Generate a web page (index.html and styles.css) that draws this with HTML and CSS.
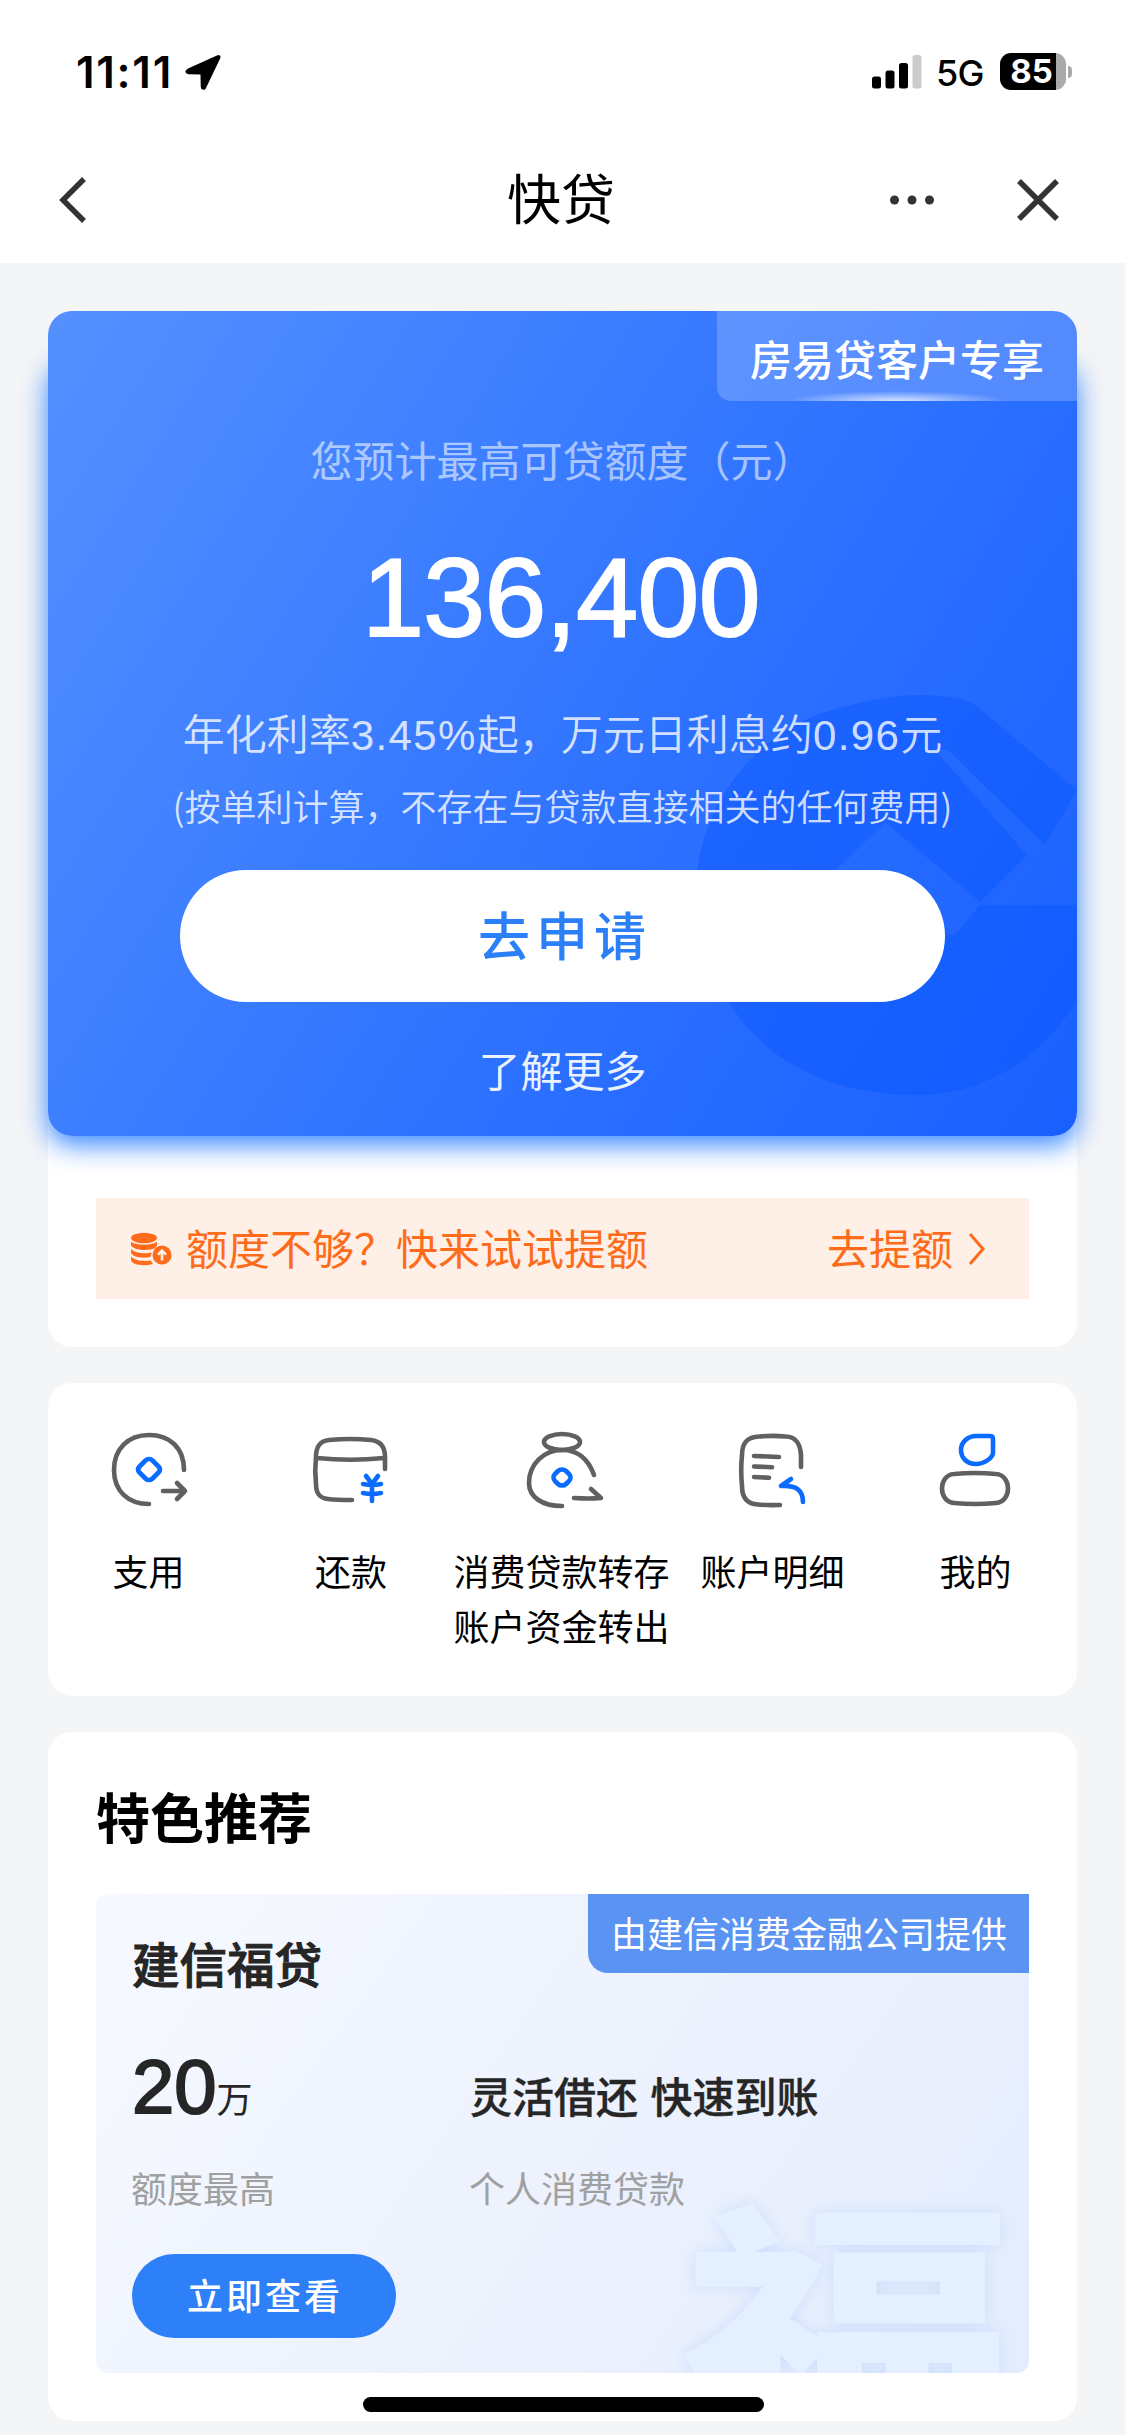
FILE: index.html
```
<!DOCTYPE html>
<html lang="zh-CN">
<head>
<meta charset="utf-8">
<title>快贷</title>
<link rel="stylesheet" href="styles.css">
</head>
<body>
<header class="top">
  <div class="status">
    <span class="time">11:11</span>
    <svg class="loc" width="36" height="36" viewBox="0 0 36 36"><path d="M33 2.500 3 16c-2 1-1.500 3 .5 3l13.200.3.300 13.500c0 2 2 2.400 3 .5L34 4C34.600 2.500 34 2 33 2.500z" stroke="#000" stroke-width="2.500" stroke-linejoin="round"/></svg>
    <svg class="signal" width="50" height="34" viewBox="0 0 50 34"><rect y="21.500" width="9" height="12" rx="2.500"/><rect x="13.500" y="15.500" width="9" height="18" rx="2.500"/><rect x="27" y="8" width="9" height="25.500" rx="2.500"/><rect x="40.500" y="0" width="9" height="33.500" rx="2.500" fill="#ccc"/></svg>
    <span class="net">5G</span>
    <div class="battery"><span>85</span></div>
    <i class="battery-tip"></i>
  </div>
  <nav class="nav">
    <svg class="back" width="30" height="48" viewBox="0 0 30 48"><path d="M26 3 5 24l21 21"/></svg>
    <h1>快贷</h1>
    <svg class="dots" width="46" height="12" viewBox="0 0 46 12"><circle cx="5.500" cy="6" r="4.500"/><circle cx="23" cy="6" r="4.500"/><circle cx="40.500" cy="6" r="4.500"/></svg>
    <svg class="close" width="44" height="44" viewBox="0 0 44 44"><path d="m3 3 38 38M41 3 3 41"/></svg>
  </nav>
</header>

<main>
  <section class="card loan">
    <div class="hero">
      <div class="hero-bg">
        <svg width="1029" height="825" viewBox="0 0 1029 825"><path d="M887 439 979 544 932 591 837 511 787 560 787 625H880L907 624 932 594H1029V690C990 750 935 784 867 784 770 784 710 740 680 690 655 650 645 600 650 555 660 480 720 410 800 395 825 388 850 384 872 384 900 384 915 388 927 394L1029 479 997 534 900 439z"/></svg>
      </div>
      <span class="ribbon">房易贷客户专享</span>
      <p class="label">您预计最高可贷额度（元）</p>
      <p class="amount">136,400</p>
      <p class="rate">年化利率<b>3.45%</b>起，万元日利息约<b>0.96</b>元</p>
      <p class="note">(按单利计算，不存在与贷款直接相关的任何费用)</p>
      <a class="apply">去申请</a>
      <a class="more">了解更多</a>
    </div>
    <div class="raise">
      <svg class="coins" width="42" height="34" viewBox="0 0 42 34"><ellipse cx="13" cy="6" rx="13" ry="5.200"/><path d="M0 9.500c4 4.200 22 4.200 26 0v3c0 2-1 3-3 4-6 2.500-20 2-23-3zM0 17c4 4.500 15 5 21 3.500-1 1.500-1.500 3-1.500 4.500-8 1.500-17 .5-19.500-4zM0 24.500c4 4.500 13 5 20 4 .5 1.500 1 2.500 2 3.500C12 34.500 1 33 0 28z"/><circle cx="31" cy="23" r="9.500"/><path d="M31 28.500V19.500m-4 3.200 4-4 4 4" stroke="#fef0e7" stroke-width="2.600" fill="none"/></svg>
      <span class="ask">额度不够？快来试试提额</span>
      <span>去提额</span>
      <svg class="go" width="18" height="34" viewBox="0 0 18 34"><path d="m2 2 13 15L2 32"/></svg>
    </div>
  </section>

  <section class="card menu">
    <a><svg width="90" height="90" viewBox="0 0 90 90"><path d="M80 42C80 20 66 7 45 7S10 21 10 42s14 34 35 34M59 63h22m-8-8 8 8-8 8"/><path class="b" d="m41.500 32.500c2-2 5-2 7 0l6 6c2 2 2 4 0 6l-6 6c-2 2-5 2-7 0l-6-6c-2-2-2-4 0-6z"/></svg><span>支用</span></a>
    <a><svg width="90" height="90" viewBox="0 0 90 90"><path d="M79 41V29C79 18 74 13 65 12c-14-1.300-28-1.300-42 0C14 13 10 18 10 29c-1 9-1 18 0 27 0 10 4 14 12 15 8 1 16 1 24 1M11 30q33 3.500 67 0"/><path class="b" d="m60 48 6 8 6-8M57 56q9 2 18 0M57 65q9 2 18 0M66 56v17"/></svg><span>还款</span></a>
    <a><svg width="90" height="90" viewBox="0 0 90 90"><ellipse cx="45" cy="14" rx="18" ry="8"/><path d="M77 47C71 30 60 22 45 22 27 22 12 36 12 55c0 14 13 23 33 23M57 70q15 1 27 0l-10-9"/><path class="b" d="m41 43c2-2 6-2 8 0l3 3c2 2 2 5 0 7l-3 3c-2 2-6 2-8 0l-3-3c-2-2-2-5 0-7z"/></svg><span>消费贷款转存<br>账户资金转出</span></a>
    <a><svg width="90" height="90" viewBox="0 0 90 90"><path d="M73 39V27C72 14 67 9 58 8.500c-9-.8-18-.8-27 0C19 9 14 15 14 27c-1 10-1 21 0 31 0 12 5 18 16 18.500 7 .7 15 .7 22 .5M26 28l25 1M26 38.500l18 .7M26 49l15 .7"/><path class="b" d="m63 51-10 7c15-1 22 4 22 16"/></svg><span>账户明细</span></a>
    <a><svg width="90" height="90" viewBox="0 0 90 90"><path d="M23 46c14-1.300 28-1.300 42 0 16 1 16 28 0 29-14 1.300-28 1.300-42 0-16-1-16-28 0-29z"/><path class="b" d="M45 8h14q3 0 3 3v14C62 29 54 36 45 36S30 30 30 22 37 8 45 8z"/></svg><span>我的</span></a>
  </section>

  <section class="card picks">
    <h2>特色推荐</h2>
    <div class="product">
      <span class="mark">福</span>
      <span class="provider">由建信消费金融公司提供</span>
      <h3>建信福贷</h3>
      <div class="facts">
        <div><p class="big"><b>20</b>万</p><p class="sub">额度最高</p></div>
        <div><p class="head">灵活借还 快速到账</p><p class="sub">个人消费贷款</p></div>
      </div>
      <a class="view">立即查看</a>
    </div>
  </section>
</main>
<i class="home"></i>
</body>
</html>
```
FILE: styles.css
```
* { box-sizing: border-box; margin: 0; padding: 0; }
body { width: 1125px; height: 2435px; overflow: hidden; position: relative; background: #f4f5f7; color: #000; font: 400 36px/1 "Noto Sans CJK SC", sans-serif; }
svg { display: block; flex: none; }
p, span, a { white-space: nowrap; }

.top { height: 263px; background: #fff; }
.status { height: 143px; display: flex; align-items: center; padding-left: 76px; }
.time { width: 109px; font: 600 44px/1 Inter, sans-serif; letter-spacing: 1.700px; }
.signal { margin-left: 651px; }
.net { width: 47px; margin: 2px 0 0 14px; font: 500 36px/1 Inter, sans-serif; letter-spacing: -.8px; }
.battery { width: 66px; height: 37px; margin-left: 17px; border-radius: 11px; background: linear-gradient(90deg, #000 56px, #aaa 56px); color: #fff; text-align: center; font: 700 33px/36px Inter, sans-serif; padding-right: 3px; }
.battery-tip { width: 4px; height: 12px; margin-left: 2px; border-radius: 0 4px 4px 0; background: #aaa; }
.nav { height: 114px; display: flex; align-items: center; padding-left: 58px; fill: none; stroke: #333; stroke-width: 5.500; }
h1 { width: 108px; margin: 0 0 7px 419px; font-size: 54px; font-weight: 400; line-height: 106px; }
.dots { margin-left: 274px; fill: #333; stroke: none; }
.close { margin-left: 81px; }

main { padding: 48px 48px 0; display: flex; flex-direction: column; gap: 36px; }
.card { background: #fff; border-radius: 24px; }
.loan { height: 1036px; isolation: isolate; }
.hero { position: relative; height: 825px; display: flex; flex-direction: column; align-items: center; color: #fff; }
.hero::before { content: ""; position: absolute; z-index: -2; inset: 45px 0 0; border-radius: 24px; box-shadow: 0 9px 27px rgba(20, 115, 255, .85); }
.hero-bg { position: absolute; z-index: -1; inset: 0; overflow: hidden; border-radius: 24px; background: linear-gradient(122deg, #5590ff 0%, #3f80ff 32%, #2c71ff 60%, #1a60ff 100%); }
.hero-bg svg { position: absolute; left: 0; top: 0; fill: #0655ff; opacity: .4; }
.ribbon { position: absolute; right: 0; top: 0; width: 360px; height: 90px; padding-left: 33px; border-radius: 0 24px 0 14px; background: radial-gradient(ellipse 110px 10px at 50% 100%, rgba(255, 255, 255, .75), transparent), rgba(255, 255, 255, .2); font-size: 42px; font-weight: 500; line-height: 94px; }
.label { margin-top: 118px; font-size: 42px; line-height: 60px; color: rgba(255, 255, 255, .58); }
.amount { margin: 44px 3px 0 0; font: 400 111px/130px "Liberation Sans", sans-serif; letter-spacing: -.5px; -webkit-text-stroke: 2px #fff; }
.rate { margin-top: 39px; font-size: 42px; font-weight: 350; line-height: 60px; color: rgba(255, 255, 255, .8); }
.rate b { font-family: "Liberation Sans", sans-serif; font-weight: 400; letter-spacing: 1.400px; }
.note { margin-top: 13px; font-weight: 350; line-height: 52px; color: rgba(255, 255, 255, .8); }
.apply { width: 765px; height: 132px; margin-top: 39px; border-radius: 66px; background: #fff; color: #2b80f8; font-size: 52px; font-weight: 500; line-height: 127px; letter-spacing: 6px; text-indent: 5px; text-align: center; }
.more { margin-top: 37px; font-size: 42px; line-height: 60px; color: rgba(255, 255, 255, .92); }
.raise { height: 101px; margin: 62px 48px 0; padding: 0 43px 0 35px; display: flex; align-items: center; background: #fef0e7; color: #fe6b1b; fill: #fe6b1b; font-size: 42px; }
.raise span { padding-bottom: 3px; }
.ask { flex: 1; margin-left: 13px; }
.go { margin-left: 15px; fill: none; stroke: #fe6b1b; stroke-width: 3; }

.menu { height: 313px; padding-top: 45px; display: grid; grid-template-columns: 201px 204px 217px 205px 201px; text-align: center; line-height: 55px; }
.menu a { display: flex; flex-direction: column; align-items: center; gap: 25px; }
.menu svg { fill: none; stroke: #606060; stroke-width: 4.600; stroke-linecap: round; stroke-linejoin: round; }
.menu .b { stroke: #0a6cff; }

.picks { height: 689px; padding: 45px 48px 0; }
h2 { font-size: 54px; font-weight: 700; line-height: 78px; }
.product { position: relative; height: 479px; margin-top: 39px; padding: 39px 36px 0; overflow: hidden; border-radius: 12px 0 12px 12px; background: linear-gradient(125deg, #f6f9ff, #edf2fd 50%, #e4ecfd); color: #262626; }
.mark { position: absolute; left: 584px; top: 287px; font-size: 336px; font-weight: 900; line-height: 1; color: #e4f0ff; text-shadow: 0 0 18px #cbdefc; transform: scaleY(.8); transform-origin: top; }
.provider { position: absolute; right: 0; top: 0; width: 441px; height: 79px; padding-left: 23px; border-radius: 0 0 0 20px; background: #5a93f2; color: #fff; line-height: 76px; }
h3 { position: relative; font-size: 47.500px; font-weight: 500; line-height: 60px; -webkit-text-stroke: 1px #262626; }
.facts { position: relative; display: grid; grid-template-columns: 338px 1fr; margin-top: 50px; }
.big, .head { height: 88px; line-height: 88px; }
.big b { font: 400 76px/88px "Liberation Sans", sans-serif; -webkit-text-stroke: 2px #262626; }
.head { padding-top: 8px; font-size: 42px; font-weight: 500; word-spacing: 3px; -webkit-text-stroke: .4px #262626; }
.sub { margin: 30px 0 0 -1px; line-height: 52px; color: #a0a0a0; }
.view { position: relative; display: block; width: 264px; height: 84px; margin-top: 41px; border-radius: 42px; background: #2e80f8; color: #fff; font-weight: 500; line-height: 81px; letter-spacing: 3px; text-indent: 2px; text-align: center; }
.home { position: absolute; left: 363px; top: 2397px; width: 401px; height: 15px; border-radius: 8px; background: #000; }
```
